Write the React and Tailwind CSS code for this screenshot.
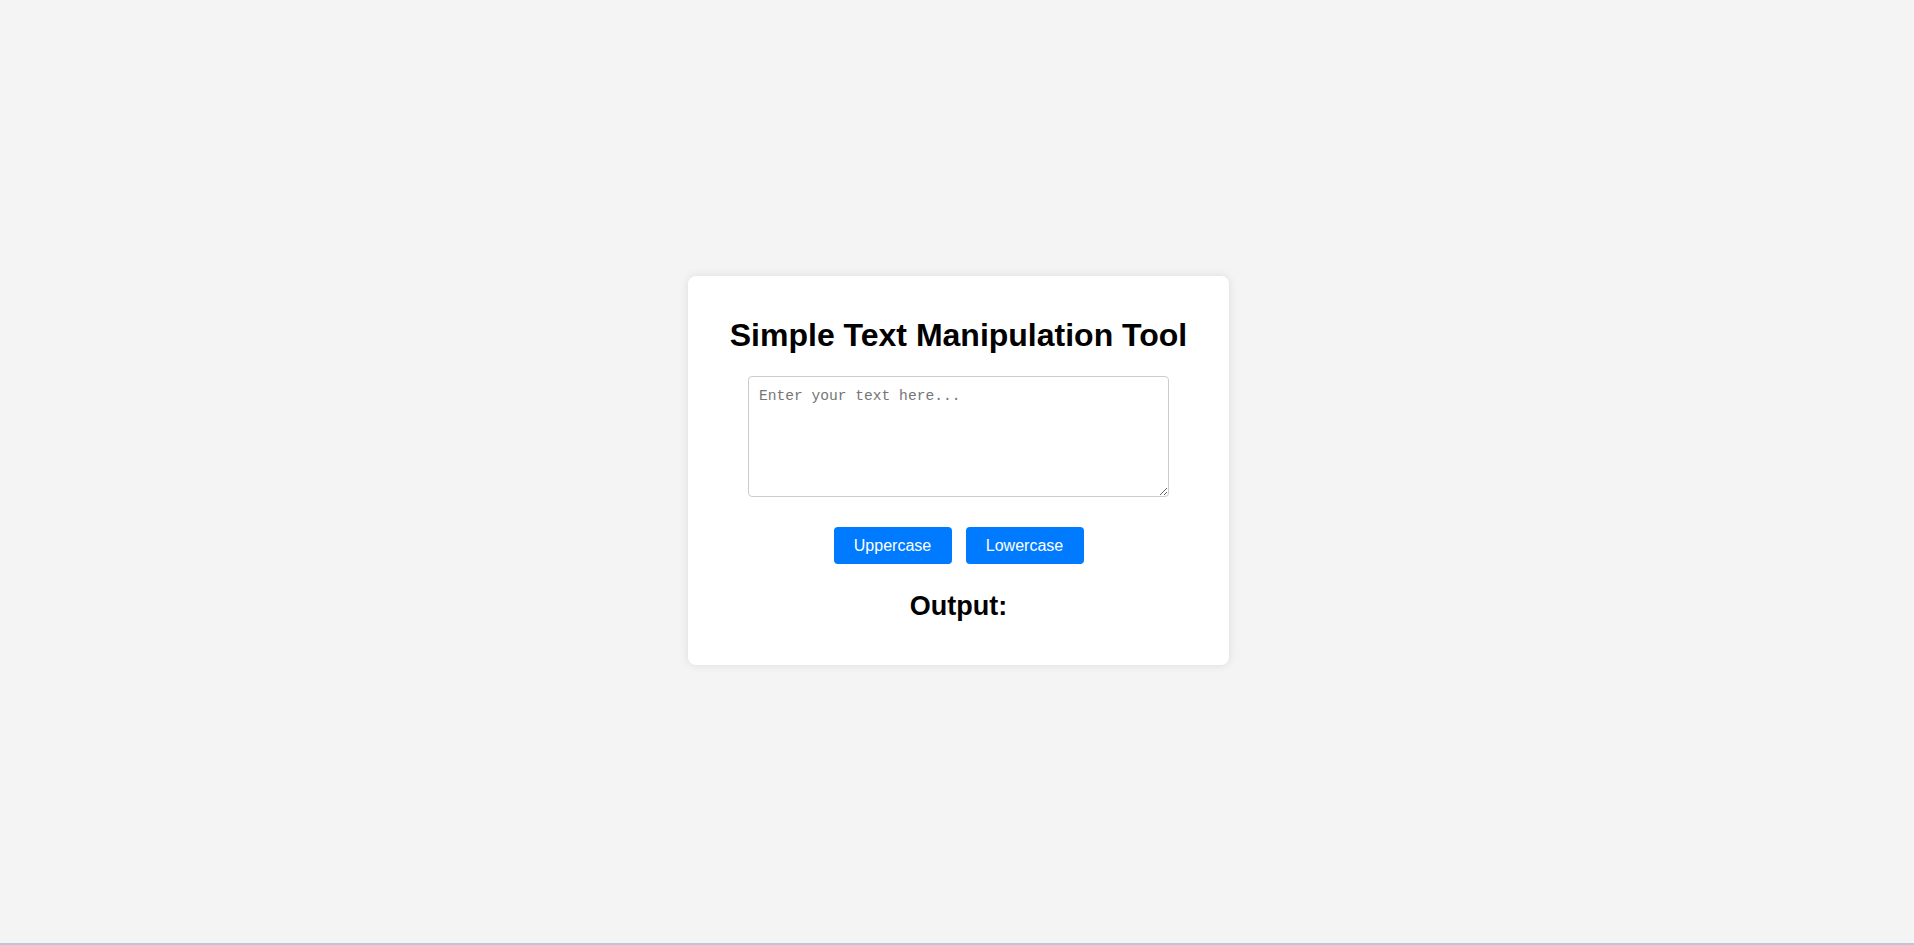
import { useState } from "react";

function App() {
  const [text, setText] = useState("");
  const [output, setOutput] = useState("");

  return (
    <div className="h-screen flex flex-col bg-[#f4f4f4] font-['Liberation_Sans',Arial,sans-serif]">
      <div className="flex-1 flex items-center justify-center">
        <div className="ml-[3px] mb-[2px] w-[541px] h-[389px] bg-white rounded-lg shadow-[0_0_10px_rgba(0,0,0,0.1)] flex flex-col items-center pt-[41px]">
          <h1 className="text-[32px] leading-[37px] font-bold text-black">
            Simple Text Manipulation Tool
          </h1>

          <textarea
            className="mt-[22px] w-[421px] h-[121px] border border-[#ccc] rounded-[4px] px-[10px] py-[11px] text-[14.6px] leading-[17px] font-['Liberation_Mono',monospace] placeholder:text-[#757575] outline-none"
            placeholder="Enter your text here..."
            value={text}
            onChange={(e) => setText(e.target.value)}
          ></textarea>

          <div className="mt-[30px] flex gap-[14px]">
            <button
              className="w-[118px] h-[37px] bg-[#007bff] text-white text-base rounded-[4px]"
              onClick={() => setOutput(text.toUpperCase())}
            >
              Uppercase
            </button>
            <button
              className="w-[118px] h-[37px] bg-[#007bff] text-white text-base rounded-[4px]"
              onClick={() => setOutput(text.toLowerCase())}
            >
              Lowercase
            </button>
          </div>

          <h2 className="mt-[27px] text-[27px] leading-[31px] font-bold text-black">
            Output:
          </h2>
          {output && <p className="mt-2 text-base">{output}</p>}
        </div>
      </div>
      <div className="h-[2px] bg-[#bcc6d8]"></div>
    </div>
  );
}

export default App;
